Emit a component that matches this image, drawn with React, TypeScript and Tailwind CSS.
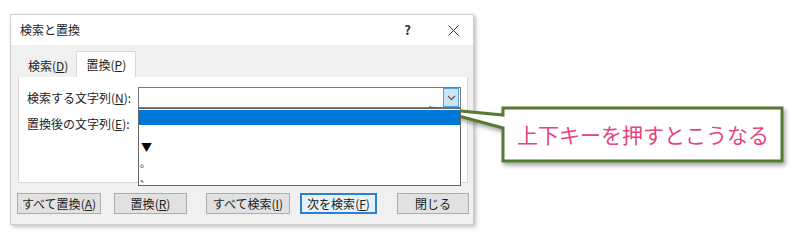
import React from 'react';

const jp = { fontFamily: '"Noto Sans CJK JP", "Noto Sans", sans-serif' };

function Btn({ label, acc, w, focus }: { label: string; acc?: string; w: string; focus?: boolean }) {
  return (
    <div
      className={`${w} h-[21px] flex items-center justify-center text-[12px] text-[#1a1a1a] ${
        focus ? 'border-2 border-[#2f7fd0] bg-[#e5f1fb]' : 'border border-[#adadad] bg-[#e1e1e1]'
      }`}
    >
      {label}
      {acc && (
        <span>
          (<u>{acc}</u>)
        </span>
      )}
    </div>
  );
}

// Callout with tail pointing to the combo list
function Callout() {
  return (
    <div className="absolute left-0 top-0 w-[800px] h-[240px] pointer-events-none">
      <svg width="800" height="240" className="absolute left-0 top-0">
        <defs>
          <filter id="sh" x="-10%" y="-20%" width="130%" height="160%">
            <feDropShadow dx="2" dy="3" stdDeviation="2" floodColor="#000" floodOpacity="0.35" />
          </filter>
        </defs>
        <path
          d="M503 108 L782 108 L782 161 L503 161 L503 128 L429 108 L503 115 Z"
          fill="#ffffff"
          stroke="#557a35"
          strokeWidth="3"
          strokeLinejoin="miter"
          filter="url(#sh)"
        />
      </svg>
      <div
        className="absolute left-[505px] top-[110px] w-[276px] h-[49px] flex items-center justify-center text-[21px] text-[#e4457e]"
        style={jp}
      >
        上下キーを押すとこうなる
      </div>
    </div>
  );
}

function App() {
  return (
    <div className="relative w-[800px] h-[240px] bg-white overflow-hidden" style={jp}>
      <div className="pt-[14px] pl-[10px]">
        <div className="w-[464px] h-[211px] flex flex-col bg-[#f0f0f0] border border-[#cfcfcf] shadow-[2px_2px_4px_rgba(0,0,0,0.25)]">
          {/* title bar */}
          <div className="h-[30px] bg-white flex items-center pl-[9px] text-[12px] text-[#222]">
            <span>検索と置換</span>
            <span className="ml-auto mr-[37px] text-[13px] font-semibold text-[#333]">?</span>
            <svg width="11" height="11" viewBox="0 0 11 11" className="mr-[14px]">
              <path d="M0.5 0.5 L10.5 10.5 M10.5 0.5 L0.5 10.5" stroke="#333" strokeWidth="1" />
            </svg>
          </div>
          {/* tabs */}
          <div className="flex items-end h-[32px] pl-[8px] text-[12px] text-[#222]">
            <div className="h-[22px] px-[9px] flex items-center">
              検索(<u>D</u>)
            </div>
            <div className="h-[26px] w-[60px] -ml-[1px] bg-white border border-b-0 border-[#d9d9d9] flex items-center justify-center">
              置換(<u>P</u>)
            </div>
          </div>
          {/* panel */}
          <div className="relative ml-[7px] mr-[5px] h-[106px] bg-white border border-t-0 border-[#d9d9d9] text-[12px] text-[#222]">
            <div className="flex items-center pt-[10px] pl-[8px]">
              <div className="w-[111px]">
                検索する文字列(<u>N</u>):
              </div>
              <div className="relative w-[323px] h-[21px] border border-[#7a7a7a] bg-white flex justify-end items-center pr-[1px]">
                <div className="w-[16px] h-[19px] bg-[#cce4f7] border border-[#569de5] flex items-center justify-center">
                  <svg width="9" height="6" viewBox="0 0 9 6">
                    <path d="M1 1 L4.5 4.5 L8 1" fill="none" stroke="#555" strokeWidth="1.2" />
                  </svg>
                </div>
                {/* dropdown list */}
                <div className="absolute left-[-1px] top-[20px] w-[323px] h-[78px] bg-white border border-[#646464] flex flex-col pt-[1px] z-10 overflow-hidden">
                  <div className="h-[15px] bg-[#0078d7]" />
                  <div className="h-[15px]" />
                  <div className="h-[15px] pl-[2px] flex items-center text-[11px] leading-[11px] text-black">▼</div>
                  <div className="h-[15px] pl-[1px] flex items-center text-[10px] leading-[10px] text-black">。</div>
                  <div className="h-[15px] pl-[1px] flex items-center text-[10px] leading-[10px] text-black">、</div>
                </div>
              </div>
            </div>
            <div className="pt-[7px] pl-[8px]">
              置換後の文字列(<u>E</u>):
            </div>
          </div>
          {/* buttons */}
          <div className="flex items-center pl-[6px] pt-[10px]">
            <Btn label="すべて置換" acc="A" w="w-[84px]" />
            <div className="w-[13px]" />
            <Btn label="置換" acc="R" w="w-[73px]" />
            <div className="w-[19px]" />
            <Btn label="すべて検索" acc="I" w="w-[84px]" />
            <div className="w-[10px]" />
            <Btn label="次を検索" acc="F" w="w-[77px]" focus />
            <div className="w-[20px]" />
            <Btn label="閉じる" w="w-[72px]" />
          </div>
        </div>
      </div>
      <Callout />
    </div>
  );
}

export default App;
